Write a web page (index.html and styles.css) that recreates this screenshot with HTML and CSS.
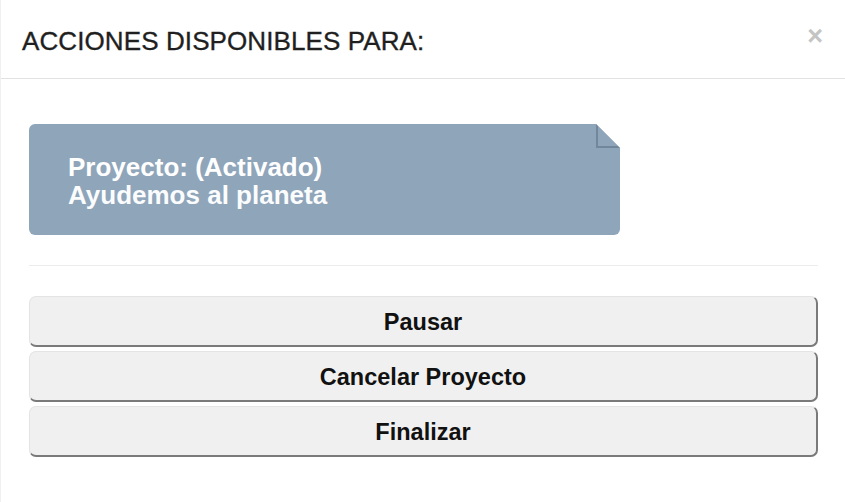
FILE: index.html
```html
<!DOCTYPE html>
<html lang="es">
<head>
<meta charset="utf-8">
<link rel="stylesheet" href="styles.css">
</head>
<body>
<div class="modal">
  <div class="modal-header">
    <h4 class="modal-title">ACCIONES DISPONIBLES PARA:</h4>
    <span class="close">&times;</span>
  </div>
  <div class="modal-body">
    <div class="note">
      <div class="note-title">Proyecto: (Activado)</div>
      <div class="note-name">Ayudemos al planeta</div>
    </div>
    <hr class="sep">
    <div class="actions">
      <button class="btn">Pausar</button>
      <button class="btn">Cancelar Proyecto</button>
      <button class="btn">Finalizar</button>
    </div>
  </div>
</div>
</body>
</html>
```
FILE: styles.css
```css
html, body {
  margin: 0;
  padding: 0;
  background: #ffffff;
}
body {
  font-family: "Liberation Sans", Arial, sans-serif;
  width: 845px;
  height: 502px;
  overflow: hidden;
}
.modal {
  height: 502px;
  border-left: 1px solid #f0f0f0;
  box-sizing: border-box;
}
.modal-header {
  height: 79px;
  box-sizing: border-box;
  border-bottom: 1px solid #e2e2e2;
  display: flex;
  align-items: flex-start;
  justify-content: space-between;
  padding: 26px 22px 0 21px;
}
.modal-title {
  margin: 0;
  font-size: 26px;
  line-height: 30px;
  font-weight: normal;
  color: #1f1f1f;
  letter-spacing: 0.1px;
  -webkit-text-stroke: 0.35px #1f1f1f;
}
.close {
  font-size: 27px;
  font-weight: bold;
  color: #c4c4c4;
  line-height: 20px;
}
.modal-body {
  padding: 45px 27px 0 28px;
}
.note {
  position: relative;
  width: 591px;
  height: 111px;
  box-sizing: border-box;
  background: #8fa5ba;
  border-radius: 6px;
  padding: 29px 0 0 39px;
  color: #ffffff;
  clip-path: polygon(0 0, 567px 0, 591px 24px, 591px 100%, 0 100%);
}
.note::after {
  content: "";
  position: absolute;
  top: 0;
  right: 0;
  width: 24px;
  height: 24px;
  box-sizing: border-box;
  border-left: 2px solid #72879b;
  border-bottom: 2px solid #72879b;
  background: linear-gradient(to bottom left, transparent 50%, #8fa5ba 50%);
}
.note-title {
  font-size: 26px;
  font-weight: bold;
  line-height: 28px;
}
.note-name {
  font-size: 26px;
  font-weight: bold;
  line-height: 28px;
  color: #fbfcfd;
}
.sep {
  margin: 30px 0 0 0;
  border: 0;
  border-top: 1px solid #ececec;
}
.actions {
  margin-top: 30px;
  display: flex;
  flex-direction: column;
  gap: 4px;
}
.btn {
  height: 51px;
  box-sizing: border-box;
  width: 100%;
  background: #f0f0f0;
  border: 1px solid #e4e4e4;
  border-right: 2px solid #7a7a7a;
  border-bottom: 2px solid #7a7a7a;
  border-radius: 7px;
  font-family: "Liberation Sans", Arial, sans-serif;
  font-size: 23.5px;
  font-weight: bold;
  color: #111111;
  padding: 2px 0 0 0;
}
```
